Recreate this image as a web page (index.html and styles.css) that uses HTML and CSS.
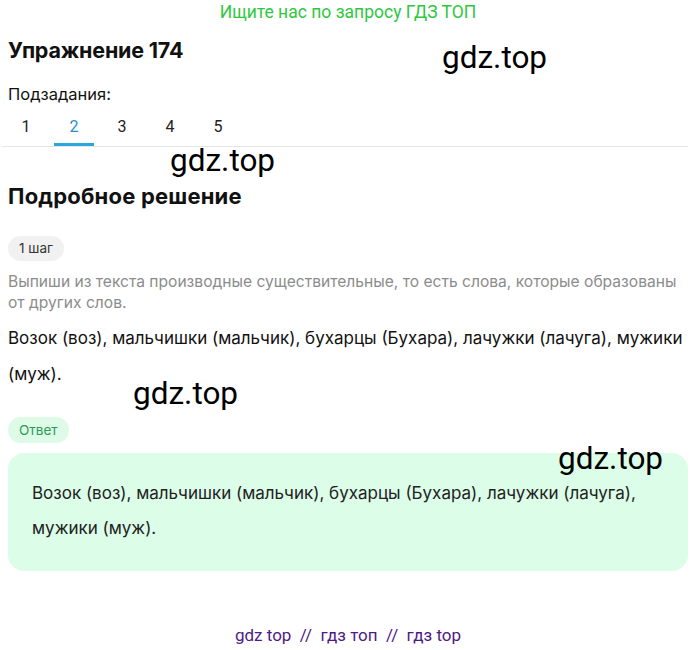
FILE: index.html
```html
<!DOCTYPE html>
<html lang="ru">
<head>
<meta charset="utf-8">
<link rel="stylesheet" href="styles.css">
</head>
<body>
<div class="page">
  <div class="promo">Ищите нас по запросу ГДЗ ТОП</div>
  <h1 class="title">Упражнение 174</h1>
  <div class="sub-label">Подзадания:</div>
  <div class="tabs">
    <span class="tab">1</span>
    <span class="tab active">2</span>
    <span class="tab">3</span>
    <span class="tab">4</span>
    <span class="tab">5</span>
  </div>
  <h2 class="section">Подробное решение</h2>
  <span class="pill step">1 шаг</span>
  <p class="hint">Выпиши из текста производные существительные, то есть слова, которые образованы от других слов.</p>
  <p class="body-text">Возок (воз), мальчишки (мальчик), бухарцы (Бухара), лачужки (лачуга), мужики (муж).</p>
  <span class="pill answer-pill">Ответ</span>
  <div class="answer">
    <p class="answer-text">Возок (воз), мальчишки (мальчик), бухарцы (Бухара), лачужки (лачуга), мужики (муж).</p>
  </div>
  <div class="footer">gdz top &nbsp;//&nbsp; гдз топ &nbsp;//&nbsp; гдз top</div>

  <span class="wm wm1">gdz.top</span>
  <span class="wm wm2">gdz.top</span>
  <span class="wm wm3">gdz.top</span>
  <span class="wm wm4">gdz.top</span>
</div>
</body>
</html>
```
FILE: styles.css
```css
* { box-sizing: border-box; }
html, body { margin: 0; padding: 0; background: #fff; }
body { font-family: Inter, "Noto Sans", sans-serif; color: #111; }
.page { position: relative; width: 700px; height: 650px; padding: 0 12px 0 8px; display: flex; flex-direction: column; align-items: flex-start; }
.promo { align-self: stretch; text-align: center; font-family: Roboto, sans-serif; color: #2ec83f; font-size: 17.5px; line-height: 22px; margin-top: 1px; }
.title { margin: 14px 0 0; font-size: 21.5px; font-weight: 700; line-height: 26px; letter-spacing: -0.2px; }
.sub-label { margin-top: 21px; font-size: 16.5px; line-height: 20px; }
.tabs { align-self: stretch; display: flex; margin: 10px 0 0 -6px; border-bottom: 1px solid #e6e6e6; }
.tab { width: 48px; text-align: center; font-family: Roboto, sans-serif; font-size: 16px; line-height: 20px; padding: 3px 0 9px; color: #222; }
.tab.active { color: #2a8fc4; background: linear-gradient(#29a7da, #29a7da) no-repeat center bottom / 40px 3px; }
.section { margin: 36px 0 0; font-size: 22px; font-weight: 700; line-height: 26px; letter-spacing: 0.2px; }
.pill { display: inline-block; border-radius: 13px; font-size: 13.5px; line-height: 25px; padding: 0 11px; }
.step { margin-top: 27px; background: #f1f1f1; color: #333; }
.hint { margin: 10px 0 0; font-size: 15.6px; line-height: 21px; color: #8c8c8c; }
.body-text { margin: 7px 0 0; font-size: 17px; line-height: 36px; color: #111; }
.answer-pill { margin-top: 25px; background: #ddfbe7; color: #2b9a55; padding: 0 11px; line-height: 26px; }
.answer { align-self: stretch; margin-top: 10px; background: #dcfde8; border-radius: 16px; padding: 23px 24px 25px; }
.answer-text { margin: 0; font-size: 17px; line-height: 35px; color: #222; }
.footer { align-self: stretch; text-align: center; margin-top: 54px; font-family: Roboto, sans-serif; font-size: 17px; color: #4f1a86; }
.wm { position: absolute; font-family: Roboto, "Liberation Sans", sans-serif; font-size: 31.5px; line-height: 34px; color: #000; }
.wm1 { left: 442px; top: 41px; }
.wm2 { left: 170px; top: 144px; }
.wm3 { left: 133px; top: 377px; }
.wm4 { left: 558px; top: 442px; }
```
